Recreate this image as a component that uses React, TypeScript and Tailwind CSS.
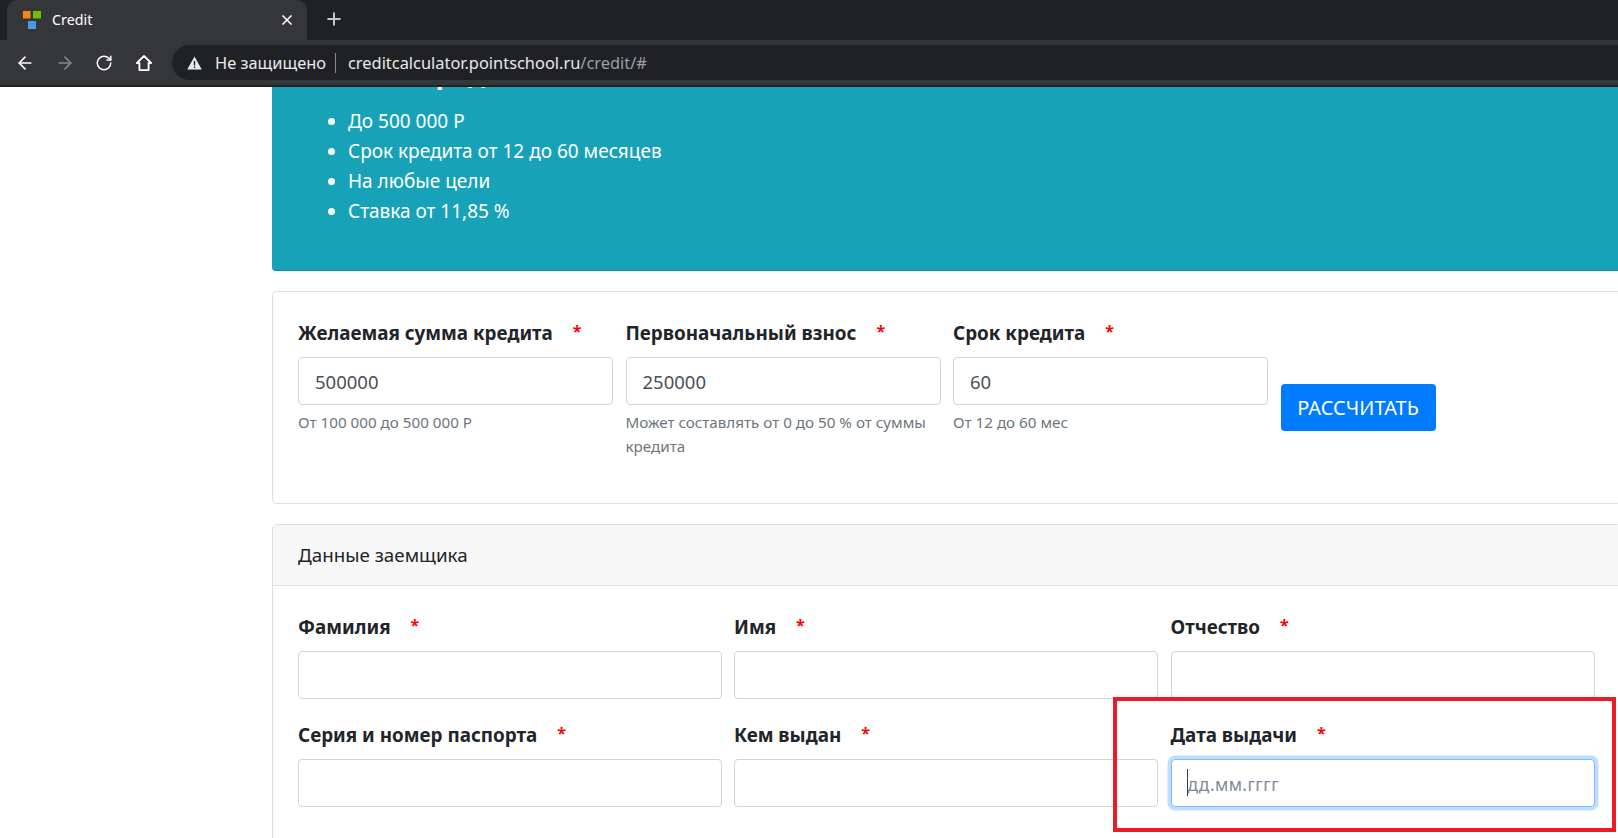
import React from "react";
import { ArrowLeft, ArrowRight, Plus, RotateCw, X } from "lucide-react";

const font = "font-['Noto_Sans',sans-serif]";

const Field = ({
  label,
  value,
  hint,
  required = true,
}: {
  label: string;
  value?: string;
  hint?: string;
  required?: boolean;
}) => (
  <div className="min-w-0">
    <div className="flex h-[24px] items-center">
      <span className="text-[18.85px] leading-6 font-bold text-[#212529]">{label}</span>
      {required && <span className="ml-[20px] -mt-[5px] text-[16px] leading-6 font-bold text-[#ff0000]">*</span>}
    </div>
    <input
      readOnly
      value={value ?? ""}
      className="mt-[12px] block h-[48px] w-full rounded-[4px] border border-[#ced4da] bg-white px-[16px] text-[18.5px] text-[#495057] outline-none"
    />
    {hint && <p className="mt-[5px] text-[15.2px] leading-[24px] text-[#6c757d]">{hint}</p>}
  </div>
);

const BrowserChrome = () => (
  <header className="h-[87px] shrink-0 bg-[#202124]">
    <div className="flex h-[40px] items-end pl-[7px]">
      <div className="flex h-[40px] w-[300px] items-center rounded-t-[10px] bg-[#35363a] pl-[16px] pr-[12px]">
        <svg width="18" height="18" viewBox="0 0 18 18" className="shrink-0">
          <rect x="0" y="0" width="7.5" height="7.5" fill="#f58a07" />
          <rect x="10" y="0" width="8" height="7.5" fill="#6fbe0a" />
          <rect x="5" y="10" width="8" height="8" fill="#4a97ee" />
        </svg>
        <span className="ml-[11px] flex-1 text-[14.3px] text-white">Credit</span>
        <X size={16} strokeWidth={2.5} className="text-white" />
      </div>
      <Plus size={20} strokeWidth={2.4} className="ml-[17px] mb-[11px] text-[#c4c6ca]" />
    </div>
    <div className="flex h-[45px] items-center bg-[#35363a]">
      <div className="flex w-[172px] shrink-0 items-center pl-[15px] text-white">
        <ArrowLeft size={20} strokeWidth={2} />
        <ArrowRight size={20} strokeWidth={2} className="ml-[20px] text-[#86888b]" />
        <RotateCw size={18} strokeWidth={2} className="ml-[20px]" />
        <svg width="20" height="20" viewBox="0 0 24 24" fill="none" stroke="currentColor" strokeWidth="2.2" className="ml-[21px]">
          <path d="M12 3.5 3.5 12H6.5V20.5H17.5V12H20.5Z" strokeLinejoin="round" />
        </svg>
      </div>
      <div className="flex h-[35px] flex-1 items-center rounded-l-full bg-[#202124] pl-[15px] pt-px text-[16.4px]">
        <svg width="15" height="14" viewBox="0 0 15 14" className="shrink-0">
          <path d="M7.5 0.5 14.8 13.5H0.2Z" fill="#e8eaed" />
          <rect x="6.8" y="5" width="1.4" height="4.5" fill="#202124" />
          <rect x="6.8" y="10.5" width="1.4" height="1.5" fill="#202124" />
        </svg>
        <span className="ml-[13px] text-[#e8eaed]">Не защищено</span>
        <span className="ml-[9px] h-[20px] w-px bg-[#86888b]" />
        <span className="ml-[12px] text-[#e8eaed]">creditcalculator.pointschool.ru</span>
        <span className="text-[#9aa0a6]">/credit/#</span>
      </div>
    </div>
    <div className="h-[2px] bg-[#202124]" />
  </header>
);

export default function App() {
  return (
    <div className={`relative flex h-[838px] w-[1618px] flex-col overflow-hidden bg-white ${font}`}>
      <BrowserChrome />
      <main className="min-h-0 flex-1 overflow-hidden pl-[272px]">
        <div className="w-[1349px]">
          <section className="-mt-[36px] h-[220px] rounded-[4px] border-b border-[#148a9c] bg-[#18a2b8] px-[26px] pt-[5px] text-white">
            <h1 className="text-[27px] leading-[36px] font-bold">Условия кредита</h1>
            <ul className="mt-[14px] list-disc pl-[50px] text-[19px] leading-[30px]">
              <li>До 500 000 Р</li>
              <li>Срок кредита от 12 до 60 месяцев</li>
              <li>На любые цели</li>
              <li>Ставка от 11,85 %</li>
            </ul>
          </section>

          <section className="mt-[20px] h-[213px] rounded-[4px] border border-[#dfdfdf] px-[25px] pt-[29px]">
            <div className="grid grid-cols-[315px_315px_315px_auto] gap-x-[12.5px]">
              <Field label="Желаемая сумма кредита" value="500000" hint="От 100 000 до 500 000 Р" />
              <Field label="Первоначальный взнос" value="250000" hint="Может составлять от 0 до 50 % от суммы кредита" />
              <Field label="Срок кредита" value="60" hint="От 12 до 60 мес" />
              <div>
                <button className="mt-[63px] h-[47px] w-[155px] rounded-[4px] bg-[#007bff] text-[20px] text-white">
                  РАССЧИТАТЬ
                </button>
              </div>
            </div>
          </section>

          <section className="mt-[20px] rounded-t-[4px] border border-[#dfdfdf]">
            <div className="flex h-[61px] items-center border-b border-[#dfdfdf] bg-[#f7f7f7] px-[25px] pt-px text-[18.8px] text-[#212529]">
              Данные заемщика
            </div>
            <div className="grid grid-cols-[423.5px_424px_424px] gap-x-[12.5px] gap-y-[24px] px-[25px] pt-[29px] pb-[60px]">
              <Field label="Фамилия" />
              <Field label="Имя" />
              <Field label="Отчество" />
              <Field label="Серия и номер паспорта" />
              <Field label="Кем выдан" />
              <div className="min-w-0">
                <div className="flex h-[24px] items-center">
                  <span className="text-[18.85px] leading-6 font-bold text-[#212529]">Дата выдачи</span>
                  <span className="ml-[20px] -mt-[5px] text-[16px] leading-6 font-bold text-[#ff0000]">*</span>
                </div>
                <div className="relative mt-[12px]">
                  <input
                    readOnly
                    placeholder="дд.мм.гггг"
                    className="block h-[48px] w-full rounded-[4px] border border-[#80bdff] bg-white px-[16px] pt-[3px] text-[17.3px] tracking-[0.4px] text-[#495057] shadow-[0_0_0_3.5px_#bfdeff] outline-none placeholder:text-[#7b8a99]"
                  />
                  <span className="absolute left-[16px] top-[10px] h-[27px] w-[1.5px] bg-[#3a3f44]" />
                </div>
              </div>
            </div>
          </section>
        </div>
      </main>
      {/* annotation frame drawn over the screenshot */}
      <div className="pointer-events-none absolute left-[1113px] top-[697px] h-[135px] w-[503px] border-[4.5px] border-[#ed1c24]" />
    </div>
  );
}
